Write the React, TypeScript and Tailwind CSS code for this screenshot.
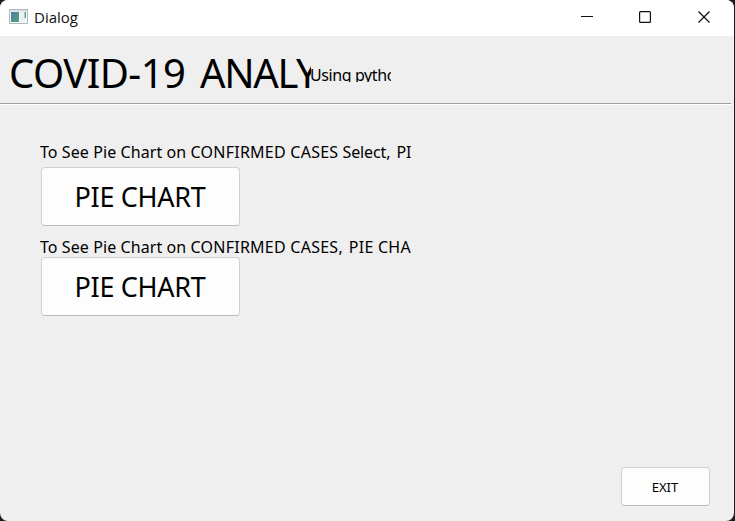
import React from 'react';

function TitleBar() {
  return (
    <header className="flex h-9 shrink-0 items-center bg-white pl-[9px]">
      <svg width="19" height="15" viewBox="0 0 19 15" className="-mt-[3px] shrink-0">
        <defs>
          <linearGradient id="pane" x1="0" y1="0" x2="1" y2="1">
            <stop offset="0" stopColor="#4a7f9c" />
            <stop offset="1" stopColor="#55a283" />
          </linearGradient>
        </defs>
        <rect x="0.5" y="0.5" width="18" height="14" fill="#f8fafb" stroke="#b3b9bd" />
        <rect x="1" y="1" width="17" height="1.5" fill="#d5dade" />
        <rect x="2" y="3" width="8" height="10" fill="url(#pane)" />
        <rect x="11" y="3" width="5" height="10" fill="#edf0f2" />
        <rect x="15.5" y="3" width="1.5" height="6" fill="#5fa58e" />
      </svg>
      <span className="-mt-[2px] ml-1.5 font-['Open_Sans',sans-serif] text-[15px] leading-5 text-[#111]">Dialog</span>
      <svg width="130" height="14" viewBox="0 0 130 14" className="mt-[-2px] mr-[23px] ml-auto" fill="none" stroke="#111" strokeWidth="1.2">
        <path d="M0 6.5H12" />
        <rect x="58.6" y="1.6" width="10.8" height="10.8" rx="1" />
        <path d="M117.5 1.5L128.5 12.5M128.5 1.5L117.5 12.5" />
      </svg>
    </header>
  );
}

function Section({ ending, className }: { ending: React.ReactNode; className: string }) {
  return (
    <section className={className}>
      <p className="h-5 w-[371px] overflow-hidden text-[16px] leading-5 whitespace-nowrap">
        <span className="tracking-[0.08px]">To See Pie Chart on </span>
        <span className="tracking-[0.25px]">CONFIRMED CASES</span>
        {ending}
      </p>
      <button className="ml-px block h-[59px] w-[199px] rounded-[4px] border border-[#d0d0d0] border-b-[#bababa] bg-[#fdfdfd] pr-[1px] text-[27px] leading-none tracking-[-0.3px]">
        PIE CHART
      </button>
    </section>
  );
}

export default function App() {
  return (
    <div className="h-[521px] w-[735px] bg-[#1b1d20] pr-px">
      <div className="flex h-full flex-col overflow-hidden rounded-[8px] bg-[#efefef] font-['Noto_Sans',sans-serif] text-black">
        <TitleBar />
        <div className="flex h-[67px] shrink-0 pl-[9px]">
          <h1 className="h-[67px] w-[301px] shrink-0 text-[40px] leading-[73px] tracking-[-0.55px] whitespace-nowrap">
            <span className="block w-[302px] overflow-hidden">
              COVID-19<span className="ml-[5.5px] tracking-[-1.3px]"> ANALYSIS</span>
            </span>
          </h1>
          <p className="mt-[29px] h-[17px] w-[81px] overflow-hidden text-[16px] leading-[20px] tracking-[-0.4px] whitespace-nowrap">Using python</p>
        </div>
        <div className="mr-[3px] h-[2px] shrink-0 border-t border-b border-t-[#a0a0a0] border-b-white" />
        <main className="flex flex-1 flex-col pl-10">
          <Section
            ending={<span className="tracking-[-0.1px]"> Select, <span className="ml-[2px]">PIE CHART</span></span>}
            className="mt-[37px] flex flex-col gap-[5px]"
          />
          <Section
            ending={<span>, <span className="ml-[2px] tracking-[0.25px]">PIE CHART</span></span>}
            className="mt-[11px] flex flex-col"
          />
          <button className="mt-auto mr-[24px] mb-[15px] h-[39px] w-[89px] self-end rounded-[4px] border border-[#d0d0d0] border-b-[#bababa] bg-[#fdfdfd] pt-[2px] pr-px text-[13px]">
            EXIT
          </button>
        </main>
      </div>
    </div>
  );
}
